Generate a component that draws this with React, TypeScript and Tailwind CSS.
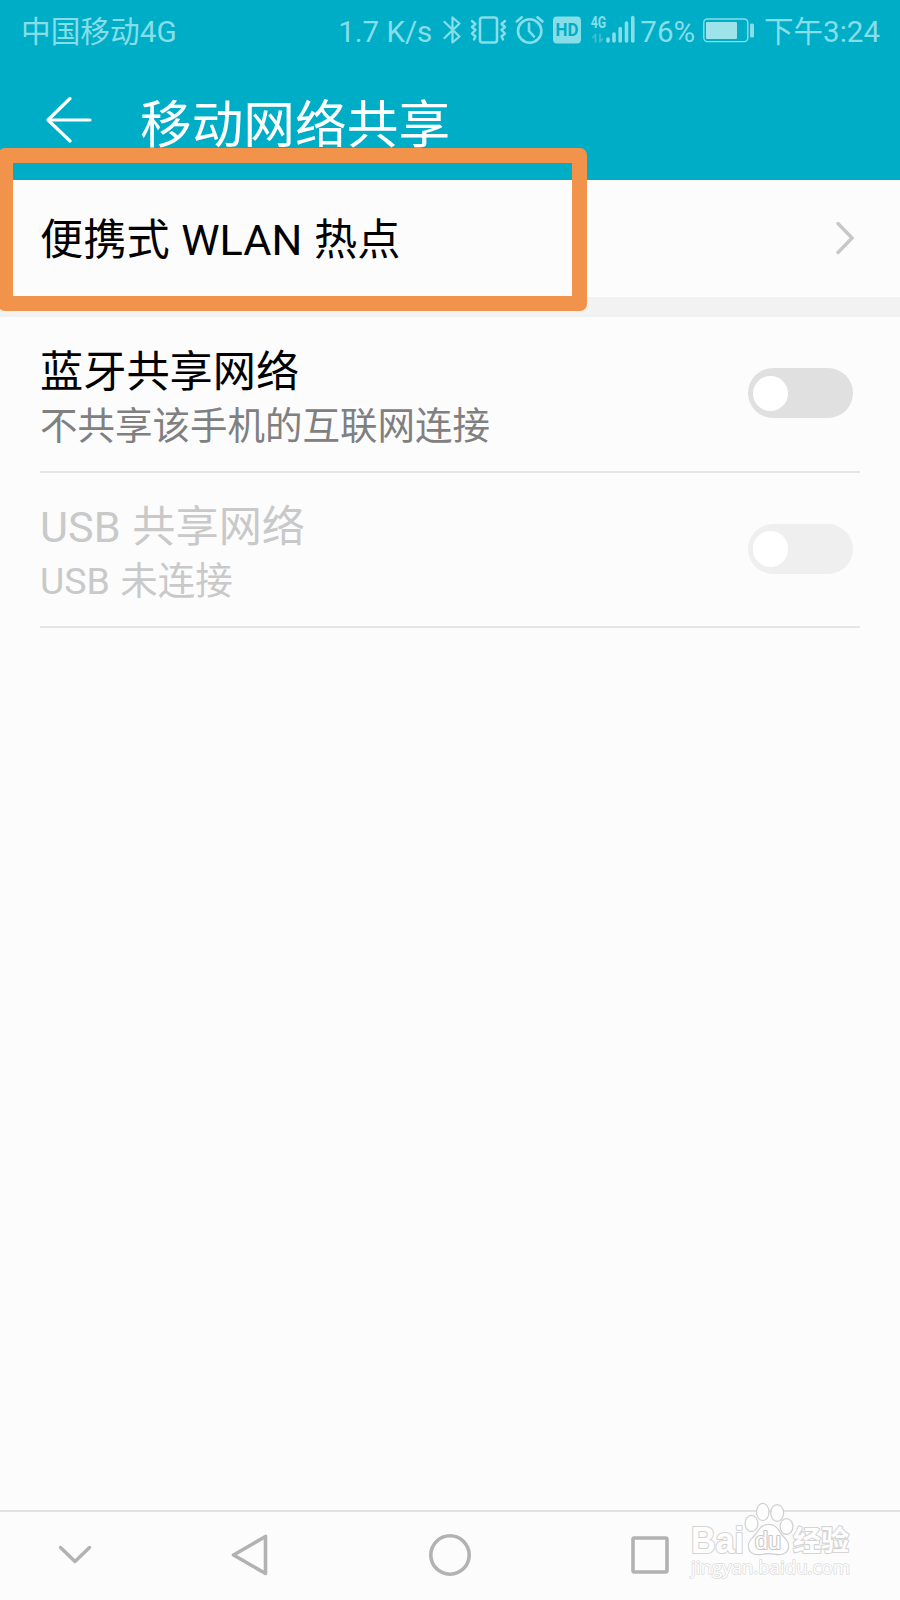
import type { ReactNode } from "react";

type SettingRowProps = {
  title: string;
  description: string;
  disabled?: boolean;
};

const settings: SettingRowProps[] = [
  { title: "蓝牙共享网络", description: "不共享该手机的互联网连接" },
  { title: "USB 共享网络", description: "USB 未连接", disabled: true },
];

export default function App() {
  return (
    <main className="relative flex h-[1600px] w-[900px] flex-col overflow-hidden bg-[#fcfcfc] font-[Roboto,'Noto_Sans_CJK_SC',sans-serif]">
      <header className="h-[180px] shrink-0 bg-[#00adc7]">
        <StatusBar />
        <div className="flex h-[120px] items-center pl-[46px]">
          <BackIcon />
          <h1 className="ml-[48px] pt-[11px] text-[51.7px] leading-[60px] text-white">移动网络共享</h1>
        </div>
      </header>

      <section className="flex h-[117px] shrink-0 items-center justify-between pr-[46px] pl-10">
        <h2 className="pt-1 text-[43.2px] leading-[52px] text-black [word-spacing:1px]">便携式 WLAN 热点</h2>
        <svg className="mb-0.5 h-[34px] w-[18px]" viewBox="0 0 18 34" fill="none" stroke="#c8c8c8" strokeWidth="3.4" strokeLinecap="round">
          <path d="M2 2.5 16 17 2 31.5" />
        </svg>
      </section>

      <div className="h-5 shrink-0 bg-[#f2f2f2]" />

      <section className="px-10">
        {settings.map((setting) => (
          <SettingRow key={setting.title} {...setting} />
        ))}
      </section>

      <NavigationBar />
      <Highlight />
      <Watermark />
    </main>
  );
}

function StatusBar() {
  return (
    <div className="flex h-[60px] items-center justify-between pr-5 pl-[21px] text-[29.5px] leading-[36px] text-[#86dee8]">
      <span className="pt-1 text-[29.7px]">中国移动4G</span>
      <div className="flex items-center">
        <span className="mr-[10px] pt-[3px]">1.7 K/s</span>
        <StatusIcons />
        <span className="pt-[3px]">76%</span>
        <svg className="ml-2 h-[26px] w-[52px]" viewBox="703 17 52 26" fill="none">
          <rect x="703.8" y="19" width="44" height="22.6" rx="3.5" stroke="#86dee8" strokeWidth="1.4" />
          <rect x="706" y="22" width="31" height="17" rx="1" fill="#9fe3ea" />
          <rect x="750" y="23.5" width="4" height="14" rx="1.5" fill="#86dee8" />
        </svg>
        <span className="ml-[9px] pt-[3px]">下午3:24</span>
      </div>
    </div>
  );
}

function StatusIcons() {
  return (
    <svg className="h-[34px] w-[198px]" viewBox="442 13.500 198 34" fill="none" stroke="#86dee8" strokeWidth="2.4" strokeLinecap="round" strokeLinejoin="round">
      <path d="M444.5 22.5 459.5 37 452.5 43V18L459.5 24 444.5 38.5" strokeWidth="2.3" />

      <rect x="480" y="18" width="17" height="25" rx="2.5" strokeWidth="2.6" />
      <path
        d="m472 21.500 3.500 3-3.500 3 3.500 3-3.500 3.500 3.500 3-1.500 3M505 21.500l-3.500 3 3.500 3-3.500 3 3.500 3.500-3.500 3 1.500 3"
        strokeWidth="2.400"
      />

      <circle cx="529.700" cy="31.500" r="11.700" strokeWidth="2.600" />
      <path d="M529 24v7.500l5 5.500M516.800 22l5-4.200M537.500 17.800l5 4.200" strokeWidth="2.600" />

      <rect x="553" y="17" width="28" height="27" rx="4" fill="#86dee8" stroke="none" />
      <text
        x="555.500"
        y="36.800"
        fontFamily="Roboto"
        fontSize="17.500"
        fontWeight="700"
        fill="#00adc7"
        stroke="none"
        textLength="23"
        lengthAdjust="spacingAndGlyphs"
      >
        HD
      </text>

      <text
        x="590.700"
        y="28"
        fontFamily="Roboto"
        fontSize="16.500"
        fontWeight="700"
        fill="#86dee8"
        stroke="none"
        textLength="15.500"
        lengthAdjust="spacingAndGlyphs"
      >
        4G
      </text>
      <path d="M595.500 42.500V35l-2.500 3M600 35v7.500l2.500-3" stroke="#40becf" strokeWidth="1.800" />
      <path d="M608 39.500v2M614 34.500v7M620.200 29v12.500M626.500 23.500v18M632.800 18v23.500" strokeWidth="3.600" />
    </svg>
  );
}

function BackIcon() {
  return (
    <svg className="h-[46px] w-[46px]" viewBox="0 0 46 46" fill="none" stroke="#fff" strokeWidth="3.2" strokeLinecap="round" strokeLinejoin="round">
      <path d="M24 1.500 2 23l22 21M2 23h42" />
    </svg>
  );
}

function SettingRow({ title, description, disabled }: SettingRowProps) {
  return (
    <div className="flex h-[155.5px] items-center justify-between border-b-2 border-[#e5e5e5] pr-[7.5px]">
      <div className="pt-[9px] [word-spacing:1px]">
        <h2 className={disabled ? "text-[43.2px] leading-[55px] text-[#c9c9c9]" : "text-[43.2px] leading-[55px] text-black"}>
          {title}
        </h2>
        <p className={disabled ? "text-[37.5px] leading-[52px] text-[#c9c9c9]" : "text-[37.5px] leading-[52px] text-[#808080]"}>
          {description}
        </p>
      </div>
      <Switch disabled={disabled} />
    </div>
  );
}

function Switch({ disabled }: { disabled?: boolean }) {
  return (
    <button
      type="button"
      role="switch"
      aria-checked={false}
      disabled={disabled}
      className={[
        "mb-px flex h-[50px] w-[105px] items-center rounded-full pl-[5px]",
        disabled ? "bg-[#efefef]" : "bg-[#e0e0e0]",
      ].join(" ")}
    >
      <span className="size-[35.5px] rounded-full bg-white" />
    </button>
  );
}

function NavigationBar() {
  return (
    <nav className="mt-auto flex h-[90px] items-center border-t-2 border-[#e2e2e2] pb-0.5">
      <NavItem className="w-[150px]">
        <path d="M7.500 14.500 22 28.500 36.500 14.500" strokeWidth="3.400" />
      </NavItem>
      <NavItem className="w-[200px]">
        <path d="M5.500 22 37.500 3.500v37z" />
      </NavItem>
      <NavItem className="w-[200px]">
        <circle cx="22" cy="22" r="19.200" />
      </NavItem>
      <NavItem className="w-[200px]">
        <rect x="5" y="5" width="34" height="34" rx="1.500" />
      </NavItem>
    </nav>
  );
}

function NavItem({ className, children }: { className: string; children: ReactNode }) {
  return (
    <span className={`flex justify-center ${className}`}>
      <svg className="size-11" viewBox="0 0 44 44" fill="none" stroke="#b2b2b2" strokeWidth="3.600" strokeLinecap="round" strokeLinejoin="round">
        {children}
      </svg>
    </span>
  );
}

function Highlight() {
  return (
    <div className="absolute top-[148px] left-[-2px] h-[163px] w-[589px] rounded-[7px] border-[15px] border-[#f1934a]" />
  );
}

function Watermark() {
  return (
    <svg
      className="absolute top-[1500px] left-[685px] h-[90px] w-[180px]"
      viewBox="685 1500 180 90"
      fill="#fefefe"
      stroke="#d4d4d4"
      strokeWidth="2.200"
      strokeLinejoin="round"
      paintOrder="stroke"
    >
      <text x="691" y="1553" fontFamily="Liberation Sans" fontSize="36" fontWeight="700" textLength="53" lengthAdjust="spacingAndGlyphs">
        Bai
      </text>
      <g stroke="#cfcfcf" strokeWidth="2.400">
        <ellipse cx="751.500" cy="1523.500" rx="5.800" ry="7.500" />
        <ellipse cx="762.800" cy="1512" rx="5.600" ry="8" />
        <ellipse cx="777.200" cy="1513" rx="5.800" ry="7.700" />
        <ellipse cx="786.500" cy="1526.500" rx="5.800" ry="7.300" />
        <path d="M768.500 1525c7 0 9.500 5 12 9 3 4.500 7.500 6 7.500 12 0 5.500-4 8-9 8-4 0-6.500-1-10.500-1s-6.500 1-10.500 1c-5 0-9-2.500-9-8 0-6 4.500-7.500 7.500-12 3-4 5-9 12-9z" />
      </g>
      <text x="755" y="1549" fontFamily="Liberation Sans" fontSize="23" stroke="#c8c8c8" textLength="26" lengthAdjust="spacingAndGlyphs">
        du
      </text>
      <text x="793" y="1551" fontFamily="Noto Sans CJK SC" fontSize="28" fontWeight="700">
        经验
      </text>
      <text x="691" y="1574" fontFamily="Open Sans" fontSize="19" stroke="#dcdcdc" strokeWidth="1.600" textLength="159" lengthAdjust="spacingAndGlyphs">
        jingyan.baidu.com
      </text>
    </svg>
  );
}
